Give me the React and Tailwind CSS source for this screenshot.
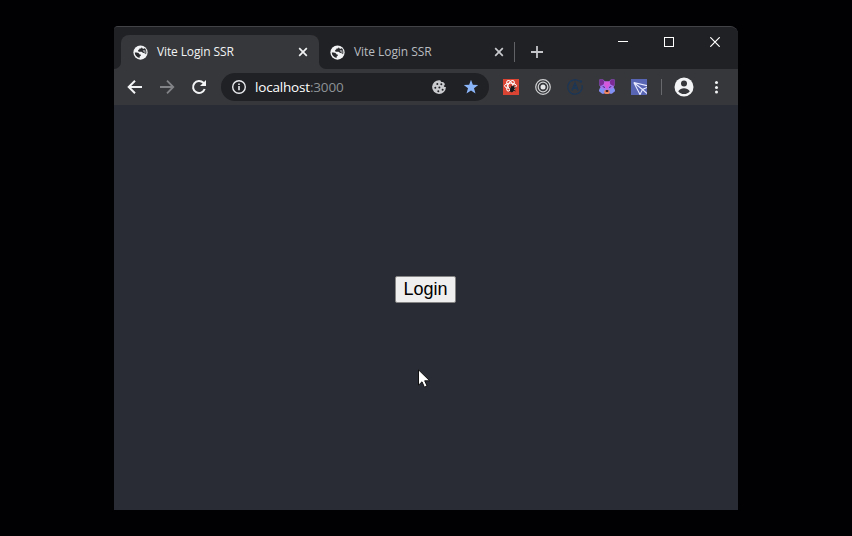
import React from "react";

function Globe() {
  return (
    <svg viewBox="0 0 16 16" className="mr-[2px] h-[15px] w-[15px] shrink-0">
      <circle cx="8" cy="8" r="7.600" fill="#f1f3f4" />
      <path
        d="M9.300 2.300c-.3 1.200-.9 1.500-2 1.600-.7 0-.8.500-.8 1.200-1 .1-1.400.6-1.200 1.400.3.800 1.100.8 2 .8h1.500c1 .1 1.400.7 1.500 1.500h1.100c1.300.1 1.700.7 2.300 1.400.8-2.700.3-5.200-1.500-6.900-.3.800-.9 1.100-1.700.9-.6-.2-.9-.9-1.200-1.900z"
        fill="#292a2d"
        transform="translate(.2 -.2)"
      />
      <path
        d="M1.900 8.100c1.300-.2 3.300 0 4.200.6.900.7.700 1.300 1.700 1.500.9.200.9 1.200.1 1.500-.9.300-.9.900-.9 2.200C4 13.400 1.900 11 1.900 8.100z"
        fill="#292a2d"
      />
      <path d="M10.300 5.200 13.300 5.600 13.600 8.700 11.300 7.600z" fill="#f1f3f4" opacity=".55" />
    </svg>
  );
}

function TabClose({ color }) {
  return (
    <svg viewBox="0 0 10 10" className="h-[10px] w-[10px] shrink-0" stroke={color} strokeWidth="1.700">
      <path d="M1.200 1.200 8.800 8.800M8.800 1.200 1.200 8.800" />
    </svg>
  );
}

function Cell({ children }) {
  return <div className="flex h-8 w-8 shrink-0 items-center justify-center">{children}</div>;
}

function TabStrip() {
  return (
    <div className="flex h-[42px] bg-[#202124] pl-[7px] pt-2">
      <div className="relative flex h-[34px] w-[198px] items-center rounded-t-lg bg-[#36373a] pl-[12px] pr-[11px]">
        <Globe />
        <span className="ml-[7px] flex-1 whitespace-nowrap text-[12px] tracking-[-0.12px] text-[#f1f3f4]">Vite Login SSR</span>
        <TabClose color="#f1f3f4" />
        <svg viewBox="0 0 7 7" className="absolute -left-[7px] bottom-0 h-[7px] w-[7px]">
          <path d="M7 0v7H0a7 7 0 0 0 7-7z" fill="#36373a" />
        </svg>
        <svg viewBox="0 0 7 7" className="absolute -right-[7px] bottom-0 h-[7px] w-[7px]">
          <path d="M0 0v7h7a7 7 0 0 1-7-7z" fill="#36373a" />
        </svg>
      </div>
      <div className="flex h-[34px] w-[195px] items-center pl-[11px] pr-[10px]">
        <Globe />
        <span className="ml-[7px] flex-1 whitespace-nowrap text-[12px] tracking-[-0.06px] text-[#b9bcc0]">Vite Login SSR</span>
        <TabClose color="#c8cacd" />
      </div>
      <div className="mt-[7px] h-5 w-px shrink-0 bg-[#606266]" />
      <div className="flex h-[34px] w-[43px] items-center justify-center">
        <svg viewBox="0 0 12 12" className="h-3 w-3" stroke="#c4c6c9" strokeWidth="1.800">
          <path d="M6 0v12M0 6h12" />
        </svg>
      </div>
      <div className="-mt-2 ml-auto flex h-[29px]">
        <div className="flex w-[46px] items-center justify-center">
          <div className="h-px w-[10px] bg-white" />
        </div>
        <div className="flex w-[46px] items-center justify-center">
          <div className="h-[10px] w-[10px] border border-white" />
        </div>
        <div className="flex w-[46px] items-center justify-center">
          <svg viewBox="0 0 10 10" className="h-[10px] w-[10px]" stroke="#fff" strokeWidth="1.200">
            <path d="M.3.3l9.400 9.400M9.700.3.3 9.700" />
          </svg>
        </div>
      </div>
    </div>
  );
}

function Toolbar() {
  return (
    <div className="flex h-9 items-center bg-[#36373a] pl-[5px]">
      <Cell>
        <svg viewBox="0 0 16 16" className="h-4 w-4" fill="none" stroke="#f1f3f4" strokeWidth="2">
          <path d="M15 8H2.500M8 1.700 1.700 8 8 14.300" />
        </svg>
      </Cell>
      <Cell>
        <svg viewBox="0 0 16 16" className="h-4 w-4" fill="none" stroke="#818386" strokeWidth="1.800">
          <path d="M1 8h12.500M8 1.700 14.300 8 8 14.300" />
        </svg>
      </Cell>
      <Cell>
        <svg viewBox="0 0 16 16" className="h-4 w-4">
          <path d="M13.700 10A6 6 0 1 1 12.400 3.800L14 5.400" fill="none" stroke="#f1f3f4" strokeWidth="2" />
          <path d="M15 1v6H9z" fill="#f1f3f4" />
        </svg>
      </Cell>
      <div className="ml-[6px] flex h-7 w-[268px] items-center rounded-full bg-[#202124] pl-[10px] pr-[2px]">
        <svg viewBox="0 0 16 16" className="h-4 w-4 shrink-0">
          <circle cx="8" cy="8" r="6.300" fill="none" stroke="#e8eaed" strokeWidth="1.400" />
          <path d="M7.200 7h1.600v4.300H7.200zM7.200 4.500h1.600V6H7.200z" fill="#e8eaed" />
        </svg>
        <span className="ml-2 flex-1 whitespace-nowrap text-[13.5px] tracking-[-0.18px] text-white">
          localhost<span className="text-[#8d9297]">:3000</span>
        </span>
        <Cell>
          <svg viewBox="0 0 16 16" className="h-4 w-4">
            <path d="M8.500 1.200A6.900 6.900 0 1 0 14.900 8c-1 .3-2-.2-2.200-1.200.9-.4 1.300-1.100 1-2-.5-1-1.500-1.700-2.500-1.700-.8 0-1.500-.7-1.700-1.700z" fill="#c9cbce" />
            <g fill="#202124">
              <circle cx="6.300" cy="5" r="1" />
              <circle cx="4.300" cy="8.700" r="1" />
              <circle cx="8.400" cy="8.500" r="1" />
              <circle cx="7.300" cy="12.200" r="1" />
              <circle cx="11.600" cy="10.700" r="1" />
              <circle cx="10.300" cy="5.300" r="1" />
            </g>
          </svg>
        </Cell>
        <Cell>
          <svg viewBox="0 0 16 16" className="h-4 w-4">
            <path d="m8 .7 1.850 5.050 5.400.2-4.250 3.350 1.500 5.200L8 11.500l-4.500 3 1.500-5.200L.750 5.950l5.400-.2z" fill="#8ab4f8" />
          </svg>
        </Cell>
      </div>
      <div className="ml-[6px] flex">
        <Cell>
          <svg viewBox="0 0 16 16" className="h-4 w-4">
            <path d="M0 0h16v16H0z" fill="#da4433" />
            <g fill="none" stroke="#fff" strokeWidth="1">
              <ellipse cx="7.500" cy="6.800" rx="6" ry="2.600" />
              <ellipse cx="7.500" cy="6.800" rx="5.800" ry="2.500" transform="rotate(60 7.500 6.800)" />
              <ellipse cx="7.500" cy="6.800" rx="5.800" ry="2.500" transform="rotate(120 7.500 6.800)" />
            </g>
            <ellipse cx="9.300" cy="10.200" rx="2.100" ry="3.200" transform="rotate(20 9.300 10.200)" fill="#19191b" />
            <path d="m6 8.500 6.500 3.500M12.700 8.500 6.500 12.500M8 6.500l1.500 2M11 6l-.8 2.500" stroke="#19191b" strokeWidth=".9" />
          </svg>
        </Cell>
        <Cell>
          <svg viewBox="0 0 16 16" className="h-4 w-4">
            <g fill="none" stroke="#cfd0d2">
              <circle cx="8" cy="8" r="7.300" strokeWidth="1.200" />
              <circle cx="8" cy="8" r="4.800" strokeWidth="1.200" />
            </g>
            <circle cx="8" cy="8" r="2.500" fill="#e4e5e6" />
          </svg>
        </Cell>
        <Cell>
          <svg viewBox="0 0 16 16" className="h-4 w-4" fill="none" stroke="#1c3655">
            <path d="M12.200 2.100A7.200 7.200 0 1 0 15 6.200" strokeWidth="1.300" />
            <circle cx="13.800" cy="2.500" r="1.200" fill="#1c3655" stroke="none" />
            <path d="M5 11.500 8 4.400l3 7.100M6.300 9.300h3.200" strokeWidth="1.600" />
          </svg>
        </Cell>
        <Cell>
          <svg viewBox="0 0 16 16" className="h-4 w-4">
            <path d="M.5.500H4L6 2.500h4L12 .5h3.500v6l-1 1.500 1.500 4-3 2.500H3L0 12l1.500-4-1-1.500z" fill="#a377f2" />
            <path d="M.5.500H4L5.500 3 4.500 5.500 1.500 7l-1-1zM15.500.500H12L10.500 3l1 2.500 3 1.500 1-1z" fill="#7d2b96" />
            <path d="M5.500 2.500h5L11 6 8 10.500 5 6z" fill="#d557dc" />
            <path d="m0 12 1-3.300L6 11l-1 3.500H3zM16 12l-1-3.300L10 11l1 3.500h2z" fill="#8092f4" />
            <path d="m3.700 7.500 2.300 1M12.300 7.500 10 8.500" stroke="#4b2777" strokeWidth="1" />
            <ellipse cx="8" cy="12.900" rx="2.800" ry="2.100" fill="#ef8759" />
            <ellipse cx="8" cy="12" rx="1.500" ry="1" fill="#25142f" />
          </svg>
        </Cell>
        <Cell>
          <svg viewBox="0 0 16 16" className="h-4 w-4">
            <path d="M0 0h16v16H0z" fill="#5865b5" />
            <path d="M2.800 3.500 16 6.600M2.800 3.500 9 15.500l2.500-5L16 8.500M2.800 3.500l8.700 7L16 14.500" fill="none" stroke="#e8eaff" strokeWidth="1.100" />
          </svg>
        </Cell>
      </div>
      <div className="ml-[6px] h-4 w-px bg-[#67696c]" />
      <div className="ml-[6px] flex">
        <Cell>
          <svg viewBox="0 0 20 20" className="h-5 w-5">
            <circle cx="10" cy="10" r="9.500" fill="#f1f3f4" />
            <circle cx="10" cy="6.500" r="3" fill="#36373a" />
            <path d="M4.200 14.200c1.300-2.100 3.500-3 5.800-3s4.500.9 5.800 3c-1.300 1.800-3.400 2.900-5.800 2.900s-4.500-1.100-5.800-2.900z" fill="#36373a" />
          </svg>
        </Cell>
        <Cell>
          <svg viewBox="0 0 16 16" className="h-4 w-4" fill="#f1f3f4">
            <circle cx="8.500" cy="3.500" r="1.500" />
            <circle cx="8.500" cy="8.500" r="1.500" />
            <circle cx="8.500" cy="13" r="1.500" />
          </svg>
        </Cell>
      </div>
    </div>
  );
}

export default function App() {
  return (
    <div className="h-[536px] w-[852px] overflow-hidden bg-[#010103] pl-[114px] pt-[26px] font-['Open_Sans','Noto_Sans',sans-serif]">
      <div className="flex h-[484px] w-[624px] flex-col overflow-hidden rounded-tr-lg rounded-tl-[4px] border-t border-[#424346] bg-[#2a2c35]">
        <TabStrip />
        <Toolbar />
        <div className="relative flex flex-1 justify-center bg-[#2a2c35] pt-[171px]">
          <button className="ml-[-1px] flex h-[27px] w-[61px] items-center justify-center rounded-[2px] border border-[#858585] bg-[#efefef] pb-px font-['Liberation_Sans',Arial,sans-serif] text-[18px] leading-none text-black">
            Login
          </button>
          <svg viewBox="0 0 12 19" className="absolute left-[304px] top-[264px] h-[19px] w-[12px]">
            <path d="M.5.8v15.400l3.500-3.400 2.400 5.400 2.700-1.200-2.400-5.200h5z" fill="#fff" stroke="#111" strokeWidth="1" />
          </svg>
        </div>
      </div>
    </div>
  );
}
